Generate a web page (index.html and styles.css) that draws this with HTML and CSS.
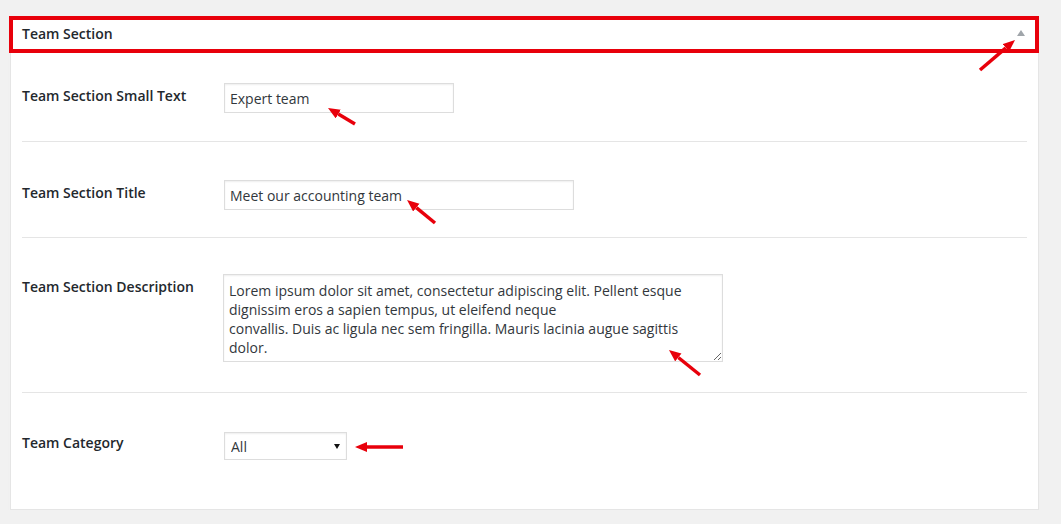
FILE: index.html
```html
<!DOCTYPE html>
<html>
<head>
<meta charset="utf-8">
<link rel="stylesheet" href="styles.css">
</head>
<body>
<div class="panel">
  <div class="panel-header">
    <span class="panel-title">Team Section</span>
    <span class="toggle"></span>
  </div>
  <div class="panel-body">
    <div class="row row-first">
      <div class="label">Team Section Small Text</div>
      <div class="field"><input class="text small" type="text" value="Expert team"></div>
    </div>
    <div class="row">
      <div class="label">Team Section Title</div>
      <div class="field"><input class="text wide" type="text" value="Meet our accounting team"></div>
    </div>
    <div class="row row-area">
      <div class="label">Team Section Description</div>
      <div class="field"><textarea class="area">Lorem ipsum dolor sit amet, consectetur adipiscing elit. Pellent esque
dignissim eros a sapien tempus, ut eleifend neque
convallis. Duis ac ligula nec sem fringilla. Mauris lacinia augue sagittis
dolor.</textarea></div>
    </div>
    <div class="row row-last">
      <div class="label label-select">Team Category</div>
      <div class="field">
        <span class="select-wrap">
          <select class="select"><option>All</option></select>
          <span class="caret"></span>
        </span>
      </div>
    </div>
  </div>
</div>
<svg class="annotations" width="1061" height="524" viewBox="0 0 1061 524">
  <defs>
    <marker id="head" markerUnits="userSpaceOnUse" markerWidth="13" markerHeight="11" refX="0" refY="5" orient="auto">
      <path d="M0,0 L12,5 L0,10 z" fill="#e8000b"/>
    </marker>
  </defs>
  <g stroke="#e8000b" stroke-width="3.5" fill="none">
    <line x1="980" y1="70" x2="1005.9" y2="47.8" marker-end="url(#head)"/>
    <line x1="355" y1="124" x2="338.3" y2="114.1" marker-end="url(#head)"/>
    <line x1="435" y1="223" x2="416.3" y2="207.6" marker-end="url(#head)"/>
    <line x1="700" y1="375" x2="678.3" y2="357.5" marker-end="url(#head)"/>
    <line x1="403" y1="447" x2="367" y2="447" marker-end="url(#head)"/>
  </g>
</svg>
</body>
</html>
```

FILE: styles.css
```css
html, body {
  margin: 0;
  padding: 0;
}
body {
  background: #f1f1f1;
  font-family: "Open Sans", "Noto Sans", sans-serif;
  color: #23282d;
  font-size: 14px;
  padding: 16px 22px 0 9px;
  width: 1030px;
  box-sizing: content-box;
}
.panel {
  width: 1030px;
  box-shadow: 0 1px 1px rgba(0,0,0,0.04);
}
.panel-header {
  height: 37px;
  box-sizing: border-box;
  border: 4px solid #e8000b;
  background: #fff;
  display: flex;
  align-items: center;
  justify-content: space-between;
  padding: 0 10px 0 9px;
}
.panel-title {
  font-weight: 600;
  font-size: 14px;
  line-height: 18px;
  margin-top: -1px;
}
.toggle {
  width: 0;
  height: 0;
  border-left: 4px solid transparent;
  border-right: 4px solid transparent;
  border-bottom: 6px solid #a0a5aa;
  margin-top: -4px;
}
.panel-body {
  background: #fff;
  border: 1px solid #e5e5e5;
  border-top: 0;
  padding: 0 11px;
  margin-left: 1px;
  margin-right: 0;
}
.row {
  display: flex;
  align-items: flex-start;
  padding: 38px 0 27px;
  border-bottom: 1px solid #e5e5e5;
}
.row-first { padding-top: 30px; padding-bottom: 28px; }
.row-area { padding-top: 36px; padding-bottom: 30px; }
.row-last { padding-top: 39px; padding-bottom: 49px; border-bottom: 0; }
.label {
  width: 202px;
  flex: none;
  font-weight: 600;
  line-height: 18px;
  padding-top: 4px;
  box-sizing: border-box;
}
.label-select { padding-top: 2px; }
.field {
  flex: 1;
}
.text {
  display: block;
  height: 30px;
  box-sizing: border-box;
  border: 1px solid #ddd;
  box-shadow: inset 0 1px 2px rgba(0,0,0,0.07);
  background: #fff;
  color: #32373c;
  font-family: "Open Sans", "Noto Sans", sans-serif;
  font-size: 14px;
  padding: 1px 5px 0;
  margin: 0;
  outline: none;
}
.small { width: 230px; }
.wide { width: 350px; }
.area {
  display: block;
  width: 500px;
  height: 88px;
  box-sizing: border-box;
  margin: 0 0 0 -1px;
  border: 1px solid #ddd;
  box-shadow: inset 0 1px 2px rgba(0,0,0,0.07);
  color: #32373c;
  font-family: "Open Sans", "Noto Sans", sans-serif;
  font-size: 14px;
  line-height: 19px;
  padding: 6px 5px 2px;
  overflow: hidden;
}
.select-wrap {
  position: relative;
  display: inline-block;
  vertical-align: top;
}
.select {
  display: block;
  appearance: none;
  -webkit-appearance: none;
  width: 123px;
  height: 28px;
  box-sizing: border-box;
  border: 1px solid #ddd;
  box-shadow: inset 0 1px 2px rgba(0,0,0,0.07);
  background: #fff;
  color: #32373c;
  font-family: "Open Sans", "Noto Sans", sans-serif;
  font-size: 14px;
  padding: 0 6px;
  margin: 0;
  border-radius: 0;
}
.caret {
  position: absolute;
  right: 7px;
  top: 12px;
  width: 0;
  height: 0;
  border-left: 3px solid transparent;
  border-right: 3px solid transparent;
  border-top: 5px solid #111;
}
.annotations {
  position: absolute;
  left: 0;
  top: 0;
  pointer-events: none;
}
```
